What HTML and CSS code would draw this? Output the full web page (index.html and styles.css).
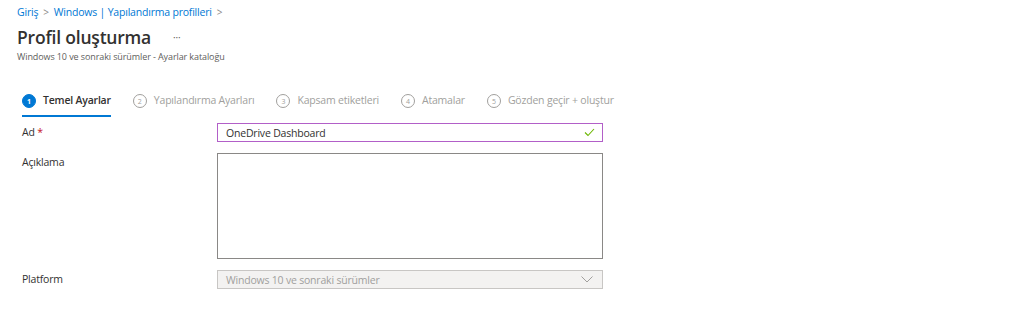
FILE: index.html
```html
<!DOCTYPE html>
<html lang="tr">
<head>
<meta charset="utf-8">
<link rel="stylesheet" href="styles.css">
</head>
<body>
<div class="page">
  <nav class="crumbs">
    <a>Giriş</a><span class="sep">&gt;</span><a>Windows | Yapılandırma profilleri</a><span class="sep">&gt;</span>
  </nav>
  <div class="titlebar">
    <h1>Profil oluşturma</h1>
    <span class="more">···</span>
  </div>
  <div class="subtitle">Windows 10 ve sonraki sürümler - Ayarlar kataloğu</div>

  <div class="steps">
    <div class="step active"><span class="num">1</span><span class="lbl">Temel Ayarlar</span></div>
    <div class="step"><span class="num">2</span><span class="lbl">Yapılandırma Ayarları</span></div>
    <div class="step"><span class="num">3</span><span class="lbl">Kapsam etiketleri</span></div>
    <div class="step"><span class="num">4</span><span class="lbl">Atamalar</span></div>
    <div class="step"><span class="num">5</span><span class="lbl">Gözden geçir + oluştur</span></div>
  </div>

  <div class="form">
    <div class="row">
      <label class="label">Ad <span class="req">*</span></label>
      <div class="input valid">
        <span>OneDrive Dashboard</span>
        <svg class="check" width="11" height="9" viewBox="0 0 11 9"><path d="M1 4.5 L4 7.5 L10 1" fill="none" stroke="#6bb700" stroke-width="1.1"/></svg>
      </div>
    </div>
    <div class="row">
      <label class="label">Açıklama</label>
      <div class="textarea"></div>
    </div>
    <div class="row">
      <label class="label">Platform</label>
      <div class="select">
        <span>Windows 10 ve sonraki sürümler</span>
        <svg class="chev" width="12" height="7" viewBox="0 0 12 7"><path d="M0.5 0.5 L6 6 L11.5 0.5" fill="none" stroke="#a19f9d" stroke-width="1"/></svg>
      </div>
    </div>
  </div>
</div>
</body>
</html>
```

FILE: styles.css
```css
* { box-sizing: border-box; }
html, body { margin: 0; padding: 0; background: #fff; }
body {
  font-family: "Open Sans", "Noto Sans", sans-serif;
  color: #323130;
  font-size: 10.5px;
  letter-spacing: -0.2px;
}
.page { padding: 4px 0 0 17px; }
.crumbs {
  display: flex;
  align-items: center;
  height: 16px;
  font-size: 10.5px;
  color: #0078d4;
}
.crumbs a { color: #0078d4; }
.crumbs .sep { color: #8a8886; margin: 0 5px; font-size: 10px; }
.titlebar {
  display: flex;
  align-items: center;
  margin-top: 5px;
  height: 24px;
}
h1 {
  margin: 0;
  font-size: 17.5px;
  font-weight: 600;
  color: #323130;
  letter-spacing: -0.2px;
}
.more { margin-left: 22px; font-size: 10px; color: #605e5c; }
.subtitle {
  font-size: 9px;
  color: #605e5c;
  letter-spacing: -0.1px;
  margin-top: 1px;
}
.steps {
  display: flex;
  margin-top: 30px;
  padding-left: 5px;
  height: 24px;
}
.step {
  display: flex;
  align-items: flex-start;
  margin-right: 22px;
  color: #a19f9d;
  font-size: 10.5px;
  height: 24px;
}
.step .num {
  width: 14px; height: 14px;
  border: 1px solid #a19f9d;
  border-radius: 50%;
  font-size: 7px;
  letter-spacing: 0;
  display: flex; align-items: center; justify-content: center;
  margin-right: 7px;
  margin-top: 1px;
}
.step.active {
  color: #323130;
  font-weight: 600;
  border-bottom: 2px solid #0078d4;
}
.step.active .num {
  background: #0078d4;
  border-color: #0078d4;
  color: #fff;
  font-weight: 700;
}
.form { margin-top: 6px; padding-left: 5px; }
.row { display: flex; margin-bottom: 11px; }
.label { width: 195px; color: #323130; padding-top: 2px; }
.req { color: #c50f1f; }
.input, .select {
  width: 386px; height: 19px;
  border: 1px solid #8a8886;
  display: flex; align-items: center; justify-content: space-between;
  padding: 0 8px;
}
.input.valid { border-color: #b25fc8; }
.textarea {
  width: 386px; height: 106px;
  border: 1px solid #8a8886;
}
.select {
  background: #f3f2f1;
  border-color: #c8c6c4;
  color: #a19f9d;
}
.check { margin-right: -1px; }
.chev { margin-right: 1px; }
```
